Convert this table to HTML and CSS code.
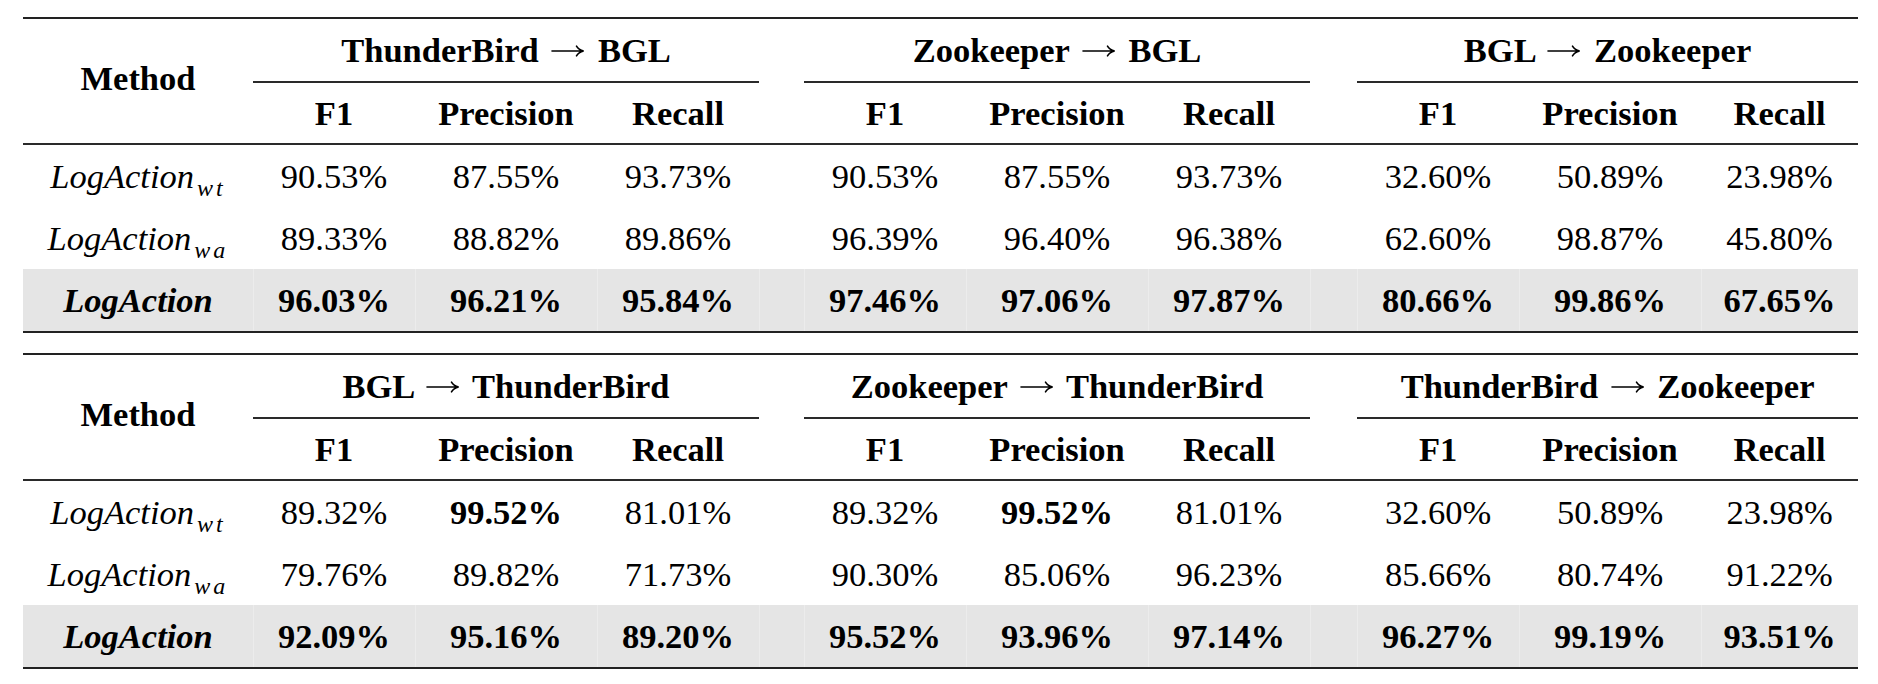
FILE: index.html
```html
<!DOCTYPE html>
<html>
<head>
    <link rel="stylesheet" href="styles.css">
</head>
<body>
    <div class="page">
        <table class="results">
            <colgroup>
                <col class="c-method">
                <col class="c-f1"><col class="c-prec"><col class="c-rec">
                <col class="c-gap">
                <col class="c-f1"><col class="c-prec"><col class="c-rec">
                <col class="c-gap2">
                <col class="c-f1"><col class="c-prec"><col class="c-rec-last">
            </colgroup>
            <thead>
                <tr class="groups">
                    <th class="method" rowspan="2">Method</th>
                    <th class="group" colspan="3">ThunderBird <svg class="arrow" viewBox="0 0 34 14"><path d="M1 7H32M25.5 2.2Q27.5 5.8 32.6 7Q27.5 8.2 25.5 11.8"/></svg> BGL</th>
                    <th class="gap"></th>
                    <th class="group" colspan="3">Zookeeper <svg class="arrow" viewBox="0 0 34 14"><path d="M1 7H32M25.5 2.2Q27.5 5.8 32.6 7Q27.5 8.2 25.5 11.8"/></svg> BGL</th>
                    <th class="gap"></th>
                    <th class="group" colspan="3">BGL <svg class="arrow" viewBox="0 0 34 14"><path d="M1 7H32M25.5 2.2Q27.5 5.8 32.6 7Q27.5 8.2 25.5 11.8"/></svg> Zookeeper</th>
                </tr>
                <tr class="metrics">
                    <th>F1</th><th>Precision</th><th>Recall</th>
                    <th></th>
                    <th>F1</th><th>Precision</th><th>Recall</th>
                    <th></th>
                    <th>F1</th><th>Precision</th><th>Recall</th>
                </tr>
            </thead>
            <tbody>
                <tr>
                    <td class="name">LogAction<sub>wt</sub></td>
                    <td>90.53%</td><td>87.55%</td><td>93.73%</td>
                    <td></td>
                    <td>90.53%</td><td>87.55%</td><td>93.73%</td>
                    <td></td>
                    <td>32.60%</td><td>50.89%</td><td>23.98%</td>
                </tr>
                <tr>
                    <td class="name">LogAction<sub>wa</sub></td>
                    <td>89.33%</td><td>88.82%</td><td>89.86%</td>
                    <td></td>
                    <td>96.39%</td><td>96.40%</td><td>96.38%</td>
                    <td></td>
                    <td>62.60%</td><td>98.87%</td><td>45.80%</td>
                </tr>
                <tr class="ours">
                    <td class="name">LogAction</td>
                    <td>96.03%</td><td>96.21%</td><td>95.84%</td>
                    <td></td>
                    <td>97.46%</td><td>97.06%</td><td>97.87%</td>
                    <td></td>
                    <td>80.66%</td><td>99.86%</td><td>67.65%</td>
                </tr>
            </tbody>
        </table>

        <table class="results">
            <colgroup>
                <col class="c-method">
                <col class="c-f1"><col class="c-prec"><col class="c-rec">
                <col class="c-gap">
                <col class="c-f1"><col class="c-prec"><col class="c-rec">
                <col class="c-gap2">
                <col class="c-f1"><col class="c-prec"><col class="c-rec-last">
            </colgroup>
            <thead>
                <tr class="groups">
                    <th class="method" rowspan="2">Method</th>
                    <th class="group" colspan="3">BGL <svg class="arrow" viewBox="0 0 34 14"><path d="M1 7H32M25.5 2.2Q27.5 5.8 32.6 7Q27.5 8.2 25.5 11.8"/></svg> ThunderBird</th>
                    <th class="gap"></th>
                    <th class="group" colspan="3">Zookeeper <svg class="arrow" viewBox="0 0 34 14"><path d="M1 7H32M25.5 2.2Q27.5 5.8 32.6 7Q27.5 8.2 25.5 11.8"/></svg> ThunderBird</th>
                    <th class="gap"></th>
                    <th class="group" colspan="3">ThunderBird <svg class="arrow" viewBox="0 0 34 14"><path d="M1 7H32M25.5 2.2Q27.5 5.8 32.6 7Q27.5 8.2 25.5 11.8"/></svg> Zookeeper</th>
                </tr>
                <tr class="metrics">
                    <th>F1</th><th>Precision</th><th>Recall</th>
                    <th></th>
                    <th>F1</th><th>Precision</th><th>Recall</th>
                    <th></th>
                    <th>F1</th><th>Precision</th><th>Recall</th>
                </tr>
            </thead>
            <tbody>
                <tr>
                    <td class="name">LogAction<sub>wt</sub></td>
                    <td>89.32%</td><td class="best">99.52%</td><td>81.01%</td>
                    <td></td>
                    <td>89.32%</td><td class="best">99.52%</td><td>81.01%</td>
                    <td></td>
                    <td>32.60%</td><td>50.89%</td><td>23.98%</td>
                </tr>
                <tr>
                    <td class="name">LogAction<sub>wa</sub></td>
                    <td>79.76%</td><td>89.82%</td><td>71.73%</td>
                    <td></td>
                    <td>90.30%</td><td>85.06%</td><td>96.23%</td>
                    <td></td>
                    <td>85.66%</td><td>80.74%</td><td>91.22%</td>
                </tr>
                <tr class="ours">
                    <td class="name">LogAction</td>
                    <td>92.09%</td><td>95.16%</td><td>89.20%</td>
                    <td></td>
                    <td>95.52%</td><td>93.96%</td><td>97.14%</td>
                    <td></td>
                    <td>96.27%</td><td>99.19%</td><td>93.51%</td>
                </tr>
            </tbody>
        </table>
    </div>
</body>
</html>
```

FILE: styles.css
```css
body {
    margin: 0;
    padding: 0;
    background: #ffffff;
    color: #000000;
    font-family: "Liberation Serif", "Times New Roman", serif;
    font-size: 34.5px;
}

.page {
    padding: 17px 0 0 23px;
}

.results {
    width: 1835px;
    table-layout: fixed;
    border-collapse: separate;
    border-spacing: 0;
    border-top: 2px solid #222222;
    border-bottom: 2px solid #222222;
}

.results + .results {
    margin-top: 20px;
}

/* column widths */
.c-method { width: 230px; }
.c-f1 { width: 162px; }
.c-prec { width: 182px; }
.c-rec { width: 162px; }
.c-rec-last { width: 157px; }
.c-gap { width: 45px; }
.c-gap2 { width: 47px; }

.results th,
.results td {
    padding: 0;
    text-align: center;
    white-space: nowrap;
}

.results th {
    font-weight: bold;
}

.groups th {
    line-height: 62px;
}

.groups .group {
    border-bottom: 2px solid #2a2a2a;
}

/* thin math arrow between dataset names */
.arrow {
    width: 34px;
    height: 14px;
    margin: 0 4px;
    vertical-align: 4px;
    fill: none;
    stroke: #000000;
    stroke-width: 1.6;
    stroke-linecap: round;
}

.results .method {
    line-height: 38px;
    vertical-align: middle;
    padding-bottom: 7px;
    border-bottom: 2px solid #2a2a2a;
}

.metrics th {
    line-height: 60px;
    border-bottom: 2px solid #2a2a2a;
}

.results td {
    line-height: 62px;
}

.name {
    font-style: italic;
}

.name sub {
    font-size: 24px;
    line-height: 0;
    vertical-align: -8px;
    letter-spacing: 3px;
    margin-left: 3px;
}

.best {
    font-weight: bold;
}

/* highlighted row for the full model */
.ours td {
    background: #e5e5e5;
    font-weight: bold;
}

.ours td + td {
    box-shadow: inset 1px 0 0 #ececec;
}
```
